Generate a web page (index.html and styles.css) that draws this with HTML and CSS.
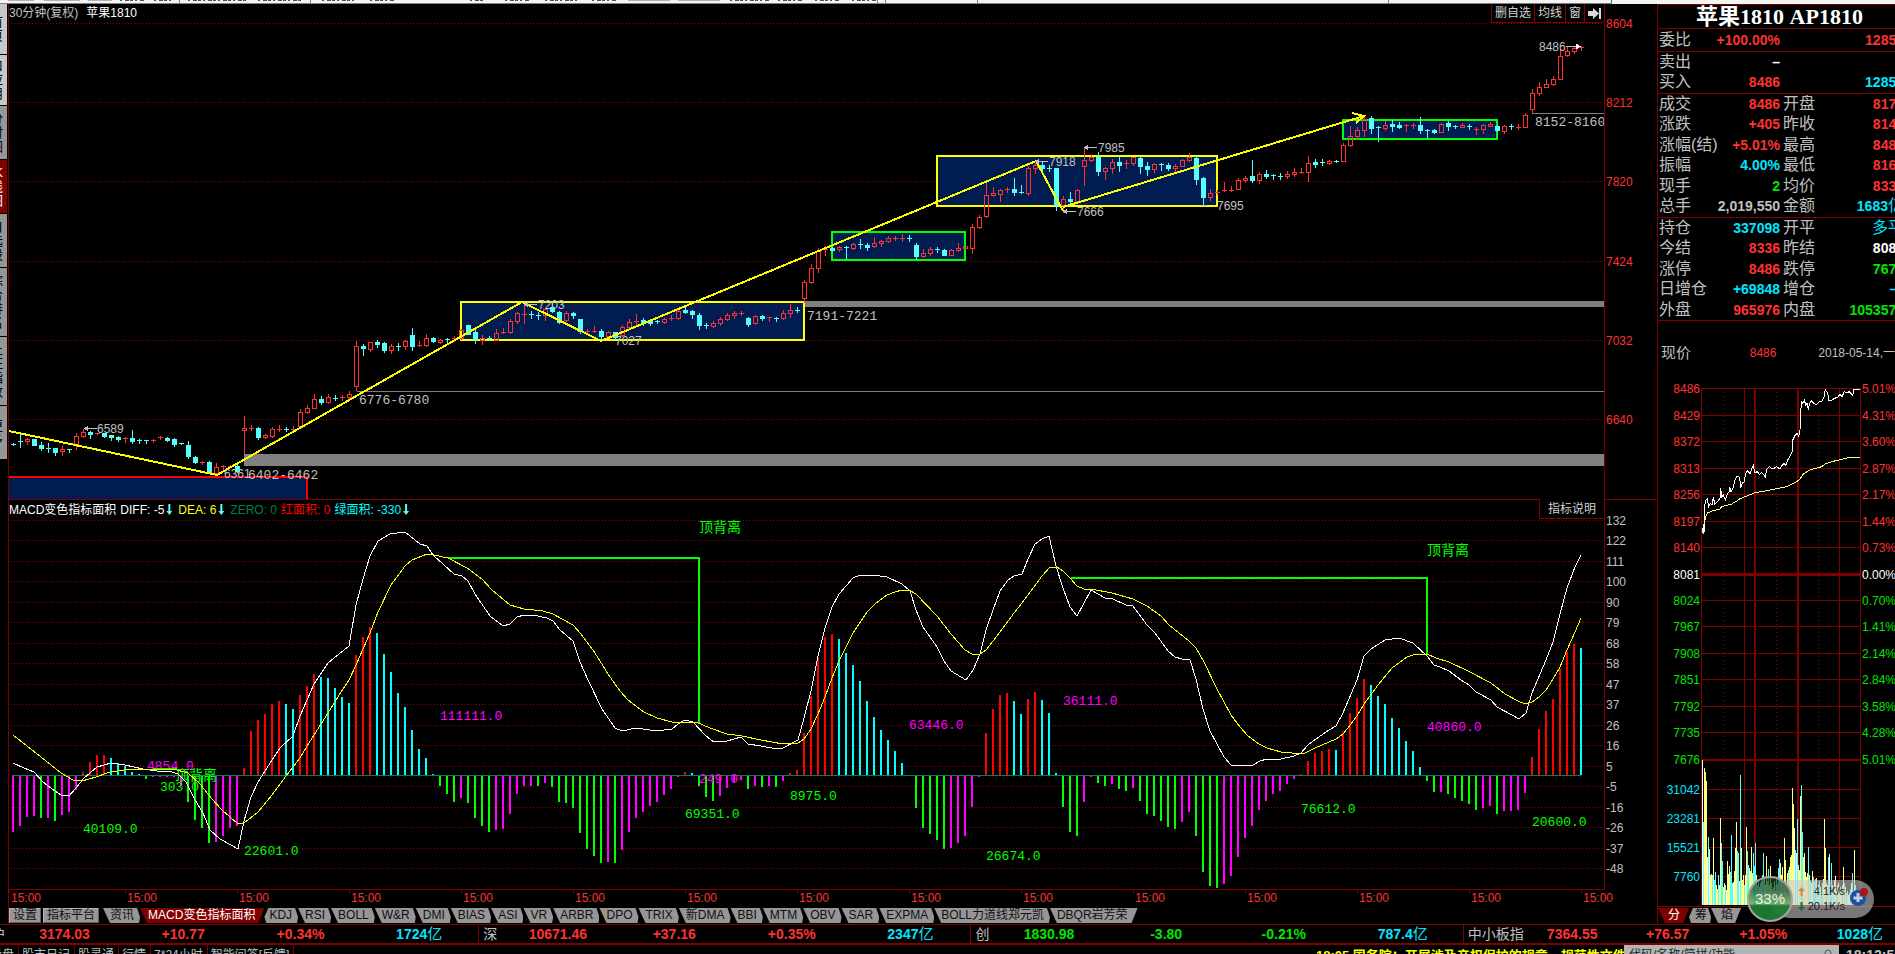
FILE: index.html
```html
<!DOCTYPE html>
<html lang="zh-CN">
<head>
<meta charset="utf-8">
<title>苹果1810 AP1810</title>
<link rel="stylesheet" href="styles.css">
</head>
<body>
<header class="toolbar"><svg class="toolbar-marks" id="toolbarMarks" aria-hidden="true"></svg></header>
<div class="workspace">
  <nav class="side">
    <button class="side-tab light">首<br>页</button>
    <button class="side-tab light">口<br>应<br>用</button>
    <button class="side-tab">分<br>时<br>图</button>
    <button class="side-tab active">K<br>线<br>图</button>
    <button class="side-tab">自<br>选<br>股</button>
    <button class="side-tab tall">综<br>合<br>排<br>名</button>
    <button class="side-tab tall">上<br>证<br>指<br>数</button>
    <button class="side-tab">更<br>多</button>
  </nav>
  <main class="charts">
    <section class="panel price-panel">
      <svg class="plot" id="price"></svg>
      <h2 class="legend"><span class="silver">30分钟(复权)</span><span class="white">苹果1810</span></h2>
      <div class="tools">
        <button>删自选</button><button>均线</button><button>窗</button><button aria-label="最新"><svg width="13" height="13" viewBox="0 0 13 13"><path d="M0 4h5V1l6 5.500-6 5.500V9H0zM11 1h2v11h-2z" fill="#d8d8d8"/></svg></button>
      </div>
    </section>
    <section class="panel macd-panel">
      <svg class="plot" id="macd"></svg>
      <h2 class="legend macd-legend">
        <span class="white">MACD变色指标面积</span>
        <span class="white">DIFF: -5<i class="down"></i></span>
        <span class="yellow">DEA: 6<i class="down"></i></span>
        <span class="dgreen">ZERO: 0</span>
        <span class="pure-red">红面积: 0</span>
        <span class="aqua">绿面积: -330<i class="down"></i></span>
      </h2>
      <div class="tools"><button class="explain">指标说明</button></div>
    </section>
    <nav class="tabs">
      <button class="box">设置</button><button class="box">指标平台</button>
      <button class="tab news">资讯</button><button class="tab on">MACD变色指标面积</button><button class="tab first">KDJ</button><button class="tab">RSI</button><button class="tab">BOLL</button><button class="tab">W&amp;R</button><button class="tab">DMI</button><button class="tab">BIAS</button><button class="tab">ASI</button><button class="tab">VR</button><button class="tab">ARBR</button><button class="tab">DPO</button><button class="tab">TRIX</button><button class="tab">新DMA</button><button class="tab">BBI</button><button class="tab">MTM</button><button class="tab">OBV</button><button class="tab">SAR</button><button class="tab">EXPMA</button><button class="tab">BOLL力道线郑元凯</button><button class="tab last">DBQR岩芳荣</button>
    </nav>
  </main>
  <aside class="quote">
    <h1 class="quote-title">苹果1810 AP1810</h1>
    <dl class="rows">
      <div class="row end"><dt>委比</dt><dd class="red">+100.00%</dd><dt></dt><dd class="red">12850</dd></div>
      <div class="row"><dt>卖出</dt><dd class="white">–</dd><dt></dt><dd></dd></div>
      <div class="row end"><dt>买入</dt><dd class="red">8486</dd><dt></dt><dd class="cyan">12850</dd></div>
      <div class="row"><dt>成交</dt><dd class="red">8486</dd><dt>开盘</dt><dd class="red">8170</dd></div>
      <div class="row"><dt>涨跌</dt><dd class="red">+405</dd><dt>昨收</dt><dd class="red">8141</dd></div>
      <div class="row"><dt>涨幅(结)</dt><dd class="red">+5.01%</dd><dt>最高</dt><dd class="red">8486</dd></div>
      <div class="row"><dt>振幅</dt><dd class="cyan">4.00%</dd><dt>最低</dt><dd class="red">8161</dd></div>
      <div class="row"><dt>现手</dt><dd class="green">2</dd><dt>均价</dt><dd class="red">8336</dd></div>
      <div class="row end"><dt>总手</dt><dd class="silver">2,019,550</dd><dt>金额</dt><dd class="cyan">1683<em>亿</em></dd></div>
      <div class="row"><dt>持仓</dt><dd class="cyan">337098</dd><dt>开平</dt><dd class="cyan"><em>多平</em></dd></div>
      <div class="row"><dt>今结</dt><dd class="red">8336</dd><dt>昨结</dt><dd class="white">8081</dd></div>
      <div class="row"><dt>涨停</dt><dd class="red">8486</dd><dt>跌停</dt><dd class="green">7676</dd></div>
      <div class="row"><dt>日增仓</dt><dd class="cyan">+69848</dd><dt>增仓</dt><dd class="cyan">—</dd></div>
      <div class="row end"><dt>外盘</dt><dd class="red">965976</dd><dt>内盘</dt><dd class="green">1053574</dd></div>
    </dl>
    <div class="now"><span class="now-label">现价</span><span class="now-price">8486</span><span class="now-date">2018-05-14,一</span></div>
    <svg class="intraday" id="intraday"></svg>
    <nav class="tabs quote-tabs"><button class="tab on">分</button><button class="tab first">筹</button><button class="tab last">焰</button></nav>
    <div class="netmeter">
      <div class="net-pill">
        <span><svg width="7" height="9" viewBox="0 0 7 9"><path d="M3.500 0 7 4H4.500v5h-2V4H0z" fill="#d0885a"/></svg>4.1K/s</span>
        <span><svg width="7" height="9" viewBox="0 0 7 9"><path d="M3.500 9 7 5H4.500V0h-2v5H0z" fill="#1f6a3a"/></svg>20.1K/s</span>
      </div>
      <div class="net-ball">33%</div>
      <svg class="net-plus" width="20" height="20" viewBox="0 0 20 20"><circle cx="9" cy="11" r="8" fill="#1f50a0"/><path d="M9 6v9M4.500 11h9" stroke="#c4cede" stroke-width="3"/><circle cx="15" cy="5" r="4" fill="#b01212"/></svg>
    </div>
  </aside>
</div>
<section class="indices">
  <div class="idx sh"><span><b>沪</b><strong class="red">3174.03</strong></span><strong class="red">+10.77</strong><strong class="red">+0.34%</strong><strong class="cyan">1724<em>亿</em></strong></div>
  <div class="idx sz"><span><b>深</b><strong class="red">10671.46</strong></span><strong class="red">+37.16</strong><strong class="red">+0.35%</strong><strong class="cyan">2347<em>亿</em></strong></div>
  <div class="idx cy"><span><b>创</b><strong class="green">1830.98</strong></span><strong class="green">-3.80</strong><strong class="green">-0.21%</strong><strong class="cyan">787.4<em>亿</em></strong></div>
  <div class="idx zx"><span><b>中小板指</b><strong class="red">7364.55</strong></span><strong class="red">+76.57</strong><strong class="red">+1.05%</strong><strong class="cyan">1028<em>亿</em></strong></div>
</section>
<footer class="status">
  <div class="links"><a href="#">操盘</a><a href="#">股市日记</a><a href="#">股灵通</a><a href="#">行情</a><a href="#">7*24小时</a><a href="#">智能问答[反馈]</a></div>
  <div class="news-line">18:05 国务院：开展涉及产权保护的规章、规范性文件</div>
  <div class="search"><input type="text" aria-label="搜索" placeholder="代码/名称/简拼/功能"><svg width="10" height="12" viewBox="0 0 10 12"><circle cx="5" cy="4" r="3" fill="none" stroke="#555"/></svg></div>
  <time class="clock">18:12:56</time>
</footer>
<script src="charts.js"></script>
</body>
</html>
```
FILE: styles.css
```css
* { box-sizing: border-box; }
html, body { height: 100%; }
body {
  margin: 0;
  display: flex;
  flex-direction: column;
  overflow: hidden;
  background: #000;
  color: #c0c0c0;
  font: 12px/16px "Liberation Sans", "Noto Sans CJK SC", sans-serif;
}
button { font: inherit; border: 0; margin: 0; padding: 0; background: none; color: inherit; white-space: nowrap; }
h1, h2, dl, dd { margin: 0; }
em, i { font-style: normal; }
em { font-weight: 400; font-size: 15px; line-height: 16px; }

.white { color: #fff; }
.silver { color: #c0c0c0; }
.red { color: #ff3232; }
.green { color: #00e600; }
.cyan { color: #00e6ff; }
.yellow { color: #ff0; }
.dgreen { color: #008040; }
.pure-red { color: #f00; }
.aqua { color: #0ff; }

.toolbar { flex: none; height: 4px; background: #f4f4f4; }
.toolbar-marks { display: block; width: 100%; height: 4px; }

.workspace { flex: 1; min-height: 0; display: flex; }

.side { flex: none; width: 9px; border-right: 1px solid #800000; display: flex; flex-direction: column; gap: 1px; overflow: hidden; }
.side-tab {
  flex: none; width: 8px; height: 53px; padding-right: 4px; overflow: hidden;
  display: flex; justify-content: flex-end; align-items: center;
  background: #969696; color: #000; font-size: 13px; line-height: 14px; text-align: right;
  border-right: 1px solid #000;
}
.side-tab.light { height: 50px; background: #c8c8c8; }
.side-tab.tall { height: 68px; }
.side-tab.active { background: #800000; color: #fff; }

.charts { flex: 1; min-width: 0; display: flex; flex-direction: column; }
.panel { position: relative; min-height: 0; }
.price-panel { flex: 495; }
.macd-panel { flex: 409; }
.plot { position: absolute; inset: 0; width: 100%; height: 100%; }
.legend { position: absolute; left: 0; top: 1px; display: flex; gap: 8px; font-weight: 400; font-size: 12px; line-height: 16px; white-space: nowrap; }
.macd-legend { top: 3px; gap: 4px; }
.down { display: inline-block; width: 7px; height: 11px; margin: 0 2px 0 1px; vertical-align: -1px; background: #54ffff; clip-path: polygon(3px 0, 5px 0, 5px 7px, 7px 7px, 4px 11px, 1px 7px, 3px 7px); }
.tools { position: absolute; right: 53px; top: 0; display: flex; border: 1px solid #800000; border-top: 0; border-right: 0; background: #000; line-height: 18px; }
.tools button { padding: 0 3px 0 3px; border-right: 1px solid #800000; display: flex; align-items: center; color: #d0d0d0; }
.tools button:last-child { border-right: 0; }
.tools .explain { padding: 1px 8px 0; }

.tabs { flex: none; height: 16px; display: flex; line-height: 15px; color: #101010; }
.box { background: #969696; border: 1px solid #b8b8b8; border-right-color: #606060; border-bottom-color: #606060; padding: 0 3px; margin-right: 2px; line-height: 13px; height: 15px; }
.tab { height: 15px; padding: 0 6px 0 7px; background: #969696; clip-path: polygon(0 0, calc(100% - 3px) 0, 100% 60%, calc(100% - 1px) 100%, 7px 100%); }
.tab.news { margin-left: 2px; }
.tab.on { background: #800000; color: #fff; padding: 0 9px 0 8px; clip-path: polygon(0 0, 100% 0, calc(100% - 6px) 100%, 7px 100%); }
.tab.first { padding-left: 5px; clip-path: polygon(4px 0, calc(100% - 3px) 0, 100% 60%, calc(100% - 1px) 100%, 2px 100%, 0 60%); }
.tab.last { padding-right: 10px; clip-path: polygon(0 0, 100% 0, calc(100% - 6px) 100%, 7px 100%); }

.quote { position: relative; flex: none; width: 238px; border-left: 1px solid #800000; border-top: 1px solid #800000; display: flex; flex-direction: column; overflow: hidden; }
.quote-title { flex: none; height: 24px; border-bottom: 1px solid #800000; color: #fff; text-align: center; font: bold 22px/24px "Liberation Serif", "Noto Sans CJK SC", serif; padding-left: 6px; white-space: nowrap; }
.rows { flex: none; height: 292px; display: flex; flex-direction: column; }
.row { flex: 1; display: grid; grid-template-columns: 56px 65px 43px 81px; align-items: center; padding-left: 1px; margin-right: -9px; white-space: nowrap; line-height: 20px; }
.row.end { border-bottom: 1px solid #800000; }
.row:first-child { padding-top: 1px; }
.row dt { font-size: 16px; }
.row dt + dd + dt { padding-left: 3px; }
.row dd { font-weight: 700; font-size: 14px; text-align: right; }
.row dd em { font-size: 16px; }
.now { flex: none; height: 61px; display: flex; align-items: center; padding: 2px 0 0 3px; white-space: nowrap; }
.now-label { width: 92px; font-size: 15px; }
.now-price { width: 71px; color: #ff3232; }
.intraday { flex: 1; min-height: 0; width: 100%; border-bottom: 1px solid #800000; }
.quote-tabs { height: 17px; padding-top: 1px; }
.quote-tabs .tab { padding: 0 9px 0 10px; }
.quote-tabs .tab.first { padding: 0 4px 0 6px; }
.quote-tabs .tab.last { padding: 0 8px 0 10px; }

.netmeter { position: absolute; right: 21px; bottom: 2px; width: 127px; height: 46px; display: flex; align-items: center; justify-content: flex-end; }
.net-pill { width: 104px; height: 38px; border-radius: 19px; background: rgba(200, 200, 200, .6); color: #222; padding: 4px 29px 0 28px; line-height: 15px; font-size: 11px; display: flex; flex-direction: column; }
.net-pill span { display: flex; justify-content: space-between; align-items: center; white-space: nowrap; }
.net-ball { position: absolute; left: 0; top: 0; width: 46px; height: 46px; border-radius: 50%; border: 2px solid #a4a4a4; background: linear-gradient(rgba(20, 70, 35, .7) 0 30%, rgba(90, 160, 90, .75) 60%, rgba(30, 125, 50, .95) 68%); color: #f0f0e0; font-size: 15px; line-height: 42px; text-align: center; }
.net-plus { position: absolute; right: 5px; top: 11px; }

.indices { flex: none; height: 21px; display: flex; border-top: 1px solid #800000; border-bottom: 2px solid #800000; line-height: 18px; }
.idx { display: grid; border-right: 1px solid #800000; font-size: 14px; white-space: nowrap; text-align: right; }
.idx:last-child { border-right: 0; }
.idx span { display: flex; justify-content: space-between; padding-left: 4px; }
.idx b { font-weight: 400; font-size: 14px; color: #c0c0c0; }
.sh { flex: 479; grid-template-columns: 90fr 115fr 120fr 118fr 36fr; }
.sz { flex: 492; grid-template-columns: 108fr 109fr 120fr 118fr 37fr; }
.cy { flex: 492; grid-template-columns: 103fr 108fr 124fr 122fr 35fr; }
.zx { flex: 432; grid-template-columns: 134fr 92fr 98fr 96fr 12fr; }
.sh span { padding-left: 0; }
.sh b { margin-left: -9px; }

.status { flex: none; height: 9px; display: flex; overflow: hidden; }
.links { display: flex; flex: 1; margin-left: -13px; }
.links a { height: 20px; padding: 1px 4px 0 3px; border-right: 1px solid #800000; color: #c0c0c0; text-decoration: none; line-height: 18px; white-space: nowrap; }
.news-line { flex: none; color: #ff0; font-weight: 700; font-size: 13px; line-height: 22px; width: 308px; overflow: hidden; white-space: nowrap; height: 22px; }
.search { flex: none; width: 215px; height: 22px; display: flex; background: #b4b4b4; padding-right: 6px; }
.search input { flex: 1; min-width: 0; border: 0; background: none; font: 12px/18px "Liberation Sans", "Noto Sans CJK SC", sans-serif; padding: 0 5px; height: 20px; }
.search input::placeholder { color: #222; opacity: 1; }
.search svg { margin-top: 4px; }
.clock { flex: none; width: 56px; padding-left: 7px; font-weight: 700; font-size: 14px; line-height: 20px; overflow: hidden; }

.axis { font-size: 12px; fill: #ff3232; }
.axis.grey { fill: #c0c0c0; }
.note { font-size: 12px; fill: #c0c0c0; }
.mono { font: 13px "Liberation Mono", monospace; fill: #c0c0c0; }
.cn { font-size: 14px; fill: #0f0; }
.end { text-anchor: end; }
```
FILE: charts.js
```js
const NS = 'http://www.w3.org/2000/svg';
const el = (parent, name, attrs, text) => {
  const n = document.createElementNS(NS, name);
  for (const k in attrs) n.setAttribute(k, attrs[k]);
  if (text !== undefined) n.textContent = text;
  parent.appendChild(n);
  return n;
};
const rect = (g, x, y, w, h, fill) => el(g, 'rect', { x, y, width: w, height: h, fill });
const text = (g, x, y, s, cls, fill) => el(g, 'text', fill ? { x, y, class: cls, style: 'fill:' + fill } : { x, y, class: cls }, s);
const layer = (id, dx, dy) => el(document.getElementById(id), 'g', { transform: `translate(${-dx} ${-dy})`, 'shape-rendering': 'crispEdges' });
const poly = (g, pts, stroke, w) => el(g, 'polyline', { points: pts, fill: 'none', stroke, 'stroke-width': w || 1 });
const dots = (g, x1, y1, x2, y2) => el(g, 'line', { x1, y1: y1 + 0.5, x2, y2: y2 + 0.5, stroke: '#900000', 'stroke-dasharray': '1 2' });
const barX = i => 13 + 7 * i;
const EDGE = 1604, DARK = '#800000', NAVY = '#001c50';

/* ---------- price panel ---------- */
const p = layer('price', 9, 4);
const priceLevels = [[23, 8604], [102, 8212], [181, 7820], [261, 7424], [340, 7032], [419, 6640]];
priceLevels.forEach(([y]) => dots(p, 11, y, EDGE, y));
rect(p, 244, 454, 1360, 12, '#808080');
rect(p, 357, 391, 1247, 1, '#808080');
rect(p, 805, 301, 799, 6, '#808080');
rect(p, 1533, 113, 71, 1, '#808080');
const zone = (x1, y1, x2, y2, stroke) => el(p, 'rect', { x: x1, y: y1, width: x2 - x1, height: y2 - y1, fill: NAVY, stroke, 'stroke-width': 2 });
zone(7, 477, 307, 520, '#f00');
zone(461, 302, 804, 340, '#ff0');
zone(832, 232, 965, 260, '#0f0');
zone(937, 156, 1217, 206, '#ff0');
zone(1343, 120, 1497, 139, '#0f0');

/* direction, high, body top, body bottom, low */
const candles = `c443 444 445 445|c434 441 442 447|r438 439 441 444|c439 439 445 445|c442 445 448 450|c443 448 449 452|c448 448 452 455|r446 449 451 455|c449 449 450 452|r433 436 444 449
r429 432 436 437|c431 432 434 438|r433 433 434 434|c433 433 436 437|c435 435 437 440|c436 437 439 441|r437 438 439 442|c430 438 441 443|c439 440 441 443|c440 440 441 443
r439 440 441 442|r436 437 438 439|c437 438 440 441|c438 439 444 446|c443 443 444 444|c441 445 456 458|c456 457 462 463|r461 462 463 464|c461 462 473 473|r463 467 473 474
r465 466 467 470|r465 466 467 467|c465 466 471 472|r416 428 430 454|r425 428 429 430|c427 428 437 439|r434 435 437 438|r427 429 436 437|r425 429 430 431|c427 429 430 431
r426 429 430 430|r409 412 426 427|r405 408 412 413|r394 399 408 408|c396 399 402 404|r394 397 402 403|c395 398 399 400|r395 397 398 400|r391 394 397 399|r341 346 386 390
c344 346 348 355|r342 342 349 351|c340 342 344 347|c342 343 350 352|r344 346 350 353|c343 346 347 350|r340 341 346 349|c328 335 346 350|r341 345 346 346|r334 338 345 346
c337 338 341 342|r339 340 342 343|c338 339 340 343|r336 338 339 341|r329 330 338 339|c325 325 334 334|c330 332 339 343|r335 338 340 344|c336 338 339 340|r329 333 340 340
r328 332 333 333|r319 321 332 333|r312 313 321 323|r304 314 315 323|c311 314 315 318|c312 315 316 319|r308 309 315 320|c303 307 311 312|c311 312 322 323|r311 313 320 321
c312 313 315 318|c319 319 331 333|r329 331 332 334|r326 331 332 332|c329 331 336 340|r331 332 336 338|c332 332 337 339|r325 327 335 336|r319 322 327 328|r314 321 322 326
c318 320 323 325|c319 321 323 325|c320 321 322 323|r318 319 322 323|r315 318 319 320|r310 311 318 319|c306 310 312 313|c310 311 314 318|c313 315 325 329|c323 325 326 328
r321 323 326 327|r317 319 323 325|r313 315 319 320|r311 313 315 318|r311 313 314 315|c317 318 324 326|r315 316 323 324|c315 316 318 320|r317 317 318 321|c317 318 319 321
r310 313 318 319|r304 310 313 317|c307 310 311 312|r280 282 298 302|r264 268 282 283|r248 251 268 272|r246 249 250 255|c247 248 250 251|r246 247 249 251|c246 247 248 258
r243 244 248 249|c239 244 245 248|c243 245 247 250|r237 243 246 247|r240 241 243 246|r236 238 241 242|r236 238 239 240|r234 238 239 241|c235 238 239 241|c243 245 256 259
r249 253 256 257|r247 249 253 255|c247 249 250 252|c249 250 255 255|r249 250 255 255|r243 248 250 251|r246 246 248 248|r224 227 248 253|r215 217 227 228|r183 195 216 217
r187 193 195 196|r189 190 194 201|r187 189 190 192|c178 189 192 195|c185 192 193 193|r166 168 193 195|r163 165 168 173|c162 165 168 174|c165 168 169 171|c168 168 205 210
r196 199 205 212|c192 199 201 205|r189 190 201 202|r148 160 166 185|r154 157 160 161|c152 157 171 175|r167 168 171 179|r159 162 168 173|c157 162 165 171|r160 163 164 168
r157 157 163 165|c157 158 166 173|c162 166 169 175|r163 164 169 172|c163 164 165 170|c163 165 168 170|r164 166 168 172|r159 160 166 166|r153 157 160 161|c155 158 179 184
c177 178 197 205|r189 193 197 200|r190 192 193 194|r182 190 191 191|r186 190 191 191|r178 180 189 189|r176 178 180 182|c160 176 180 182|r172 174 180 183|c170 174 176 178
c174 175 176 179|c173 176 177 179|r171 174 176 178|r168 172 174 176|r168 172 173 173|r156 163 172 181|c159 162 164 167|c159 162 163 165|r160 161 163 164|c160 161 162 162
r143 145 161 161|r126 136 145 146|r127 130 136 139|r117 119 130 136|c116 118 128 133|c126 127 128 141|r121 125 128 130|c120 124 126 131|c122 125 127 128|r124 125 126 131
r123 125 126 128|c117 125 130 133|c129 130 131 138|c129 130 132 133|r123 124 132 132|c121 123 126 130|c125 126 127 128|r123 125 127 127|c124 126 127 129|r127 129 130 134
r124 125 129 133|r122 124 126 126|c125 126 130 131|r125 126 131 133|c124 126 127 129|r124 127 128 129|r113 115 127 127|r89 93 109 113|r82 87 93 95|r79 84 87 87
r76 79 84 85|r49 56 79 79|r47 51 55 56|r46 48 51 53|r46 47 48 50`.split(/[|\n]/);
candles.forEach((s, i) => {
  const up = s[0] === 'r', [hi, top, bot, lo] = s.slice(1).split(' ').map(Number), x = barX(i);
  const color = up ? '#ff3232' : '#54ffff';
  rect(p, x, hi, 1, top - hi, color);
  rect(p, x, bot, 1, lo - bot + 1, color);
  if (up && bot - top > 1) el(p, 'rect', { x: x - 1.5, y: top + 0.5, width: 4, height: bot - top, fill: 'none', stroke: color });
  else rect(p, x - 2, top, 5, Math.max(1, bot - top + (bot - top > 1 ? 1 : 0)), color);
});

poly(p, '9,431 217,475 522,302 601,341 1036,161', '#ff0', 2);
poly(p, '1036,161 1063,211', '#ff0', 2);
poly(p, '1063,207 1364,116', '#ff0', 2);
poly(p, '1352,113 1364,116 1356,123', '#ff0', 2);

const leftArrow = (x, y) => { rect(p, x, y, 12, 1, '#c0c0c0'); el(p, 'path', { d: `M${x - 1} ${y + 0.5}l4-3v6z`, fill: '#c0c0c0' }); };
[[85, 428, 97, 6589], [525, 304, 538, 7203], [1036, 161, 1049, 7918], [1085, 147, 1098, 7985], [1064, 211, 1077, 7666]].forEach(([ax, ay, x, v]) => {
  leftArrow(ax, ay);
  text(p, x, ay + 5, v, 'note');
});
text(p, 615, 345, 7027, 'note');
text(p, 224, 478, 6361, 'note');
text(p, 1217, 210, 7695, 'note');
rect(p, 1202, 205, 5, 1, '#c0c0c0');
text(p, 1539, 51, 8486, 'note');
rect(p, 1566, 46, 14, 1, '#c0c0c0');
el(p, 'path', { d: 'M1576 43.500l5 3-5 3z', fill: '#fff' });
[[359, 404, '6776-6780'], [248, 479, '6402-6462'], [807, 320, '7191-7221'], [1535, 126, '8152-8160']].forEach(([x, y, s]) => text(p, x, y, s, 'mono'));
rect(p, EDGE, 0, 53, 600, '#000');
priceLevels.forEach(([y, v]) => text(p, 1606, y + 5, v, 'axis'));
rect(p, EDGE, 4, 1, 495, DARK);

/* ---------- MACD panel ---------- */
const m = layer('macd', 9, 499);
rect(m, 8, 499, 1650, 1, DARK);
[[520, 132], [540, 122], [561, 111], [581, 100], [602, 90], [622, 79], [643, 68], [663, 58], [684, 47], [704, 37], [725, 26], [745, 16], [766, 5], [786, -5], [807, -16], [827, -26], [848, -37], [868, -48]].forEach(([y, v]) => {
  dots(m, 11, y, EDGE, y);
  text(m, 1606, y + 5, v, 'axis grey');
});
rect(m, EDGE, 499, 1, 391, DARK);
rect(m, 8, 889, 1597, 1, DARK);
for (let k = 0; k < 15; k++) {
  const x = k === 14 ? 1581 : k ? 13 + 112 * k : 9;
  rect(m, x, 890, 1, 3, DARK);
  text(m, x + 2, 902, '15:00', 'axis');
}
/* r/c rise above the zero line, g/m hang below it */
const hist = `m56 m50 m41 m40 g42 m42 g45 m39 m36 m14 r3 r13 r20 r20 c17 c12 c9 c3 c1 g3 m1 m1 m1 m1 m10 g26 g44 g52 g67 m66 m60 m52 m50 r7 r44 r55 r61 r71 r74 c71 c66 r80 r89 r101 c98 c97 c87 c78 c72 r120 r138 r148 c142 c121 c103 c82 c68 c45 c26 c17 c1
g10 g18 g26 m22 g27 g42 g50 g56 m54 m53 m38 m18 m10 m10 g10 m7 g11 g26 g27 g32 g57 g73 g80 g87 m86 g87 m74 m56 m42 m36 m30 m26 m19 m13 m1 r3 c2 g10 g21 g25 m20 m12 m6 m4 g13 m10 g11 m10 g11 m5 r2 r5 r42 r79 r118 r138 r141 c136 c122 c110 c94 c74 c58 c45 c35 c24 c12 c0
g32 g52 g58 g64 g73 m72 m67 m60 m31 m1 r42 r66 r80 r82 c74 c61 r76 r83 c75 c62 c2 g31 g56 g60 m26 m1 g7 g10 m8 g13 g15 m12 g25 g38 g40 g45 g51 g53 m46 m36 g60 g96 g110 g112 m108 m100 m81 m62 m50 m34 m25 m18 m15 m8 m3 r1 r14 r22 r24 r26 c25 r43 r62 r77 r96 c90 c79 c71 c57 c47 c34 c24 c8
g5 g16 m16 g18 g22 g25 g28 g34 m32 m30 g38 m35 m35 m34 m17 r18 r46 r64 r76 r106 r123 r131 c127`.split(/\s+/);
const barColor = { r: '#f00', c: '#0ff', g: '#0f0', m: '#f0f' };
hist.forEach((s, i) => {
  const h = +s.slice(1), y = 'rc'.includes(s[0]) ? 775 - h : 776;
  rect(m, barX(i) - 1, y, 2, h, barColor[s[0]]);
});
rect(m, 12, 775, 1569, 1, '#008060');
[[440, 720, '111111.0', '#f0f'], [83, 833, '40109.0', '#0f0'], [244, 855, '22601.0', '#0f0'], [147, 770, '4854.0', '#f0f'], [160, 791, '303.0', '#0f0'], [685, 818, '69351.0', '#0f0'], [699, 783, '249.0', '#f0f'], [790, 800, '8975.0', '#0f0'], [909, 729, '63446.0', '#f0f'], [986, 860, '26674.0', '#0f0'], [1063, 705, '36111.0', '#f0f'], [1301, 813, '76612.0', '#0f0'], [1532, 826, '20600.0', '#0f0'], [1427, 731, '40860.0', '#f0f']].forEach(([x, y, s, f]) => text(m, x, y, s, 'mono', f));
[[699, 532], [1427, 555], [175, 780]].forEach(([x, y]) => text(m, x, y, '顶背离', 'cn'));
poly(m, '448,558 699,558 699,723', '#0f0', 2);
poly(m, '1071,578 1427,578 1427,654', '#0f0', 2);
rect(m, 153, 768, 24, 2, '#0f0');
poly(m, '13,763 24,768 34,772 43,782 55,791 61,795 69,796 76,788 84,778 97,767 111,763 125,765 143,769 157,771 169,771 178,774 186,782 195,800 203,813 210,830 220,839 231,845 238,849 244,821 251,797 258,782 272,760 280,748 293,736 300,716 307,700 314,684 328,663 339,654 349,646 356,605 363,579 370,556 378,541 390,534 405,532 420,544 427,546 433,555 454,574 462,576 468,581 475,594 490,616 503,626 510,624 517,617 524,615 533,615 547,618 553,621 560,630 573,641 580,662 588,680 602,709 615,728 622,731 636,728 657,731 672,729 678,724 685,720 693,722 706,736 714,742 727,741 741,737 748,744 761,746 777,749 783,748 798,740 804,718 811,691 818,656 825,628 832,607 839,594 853,578 860,575 873,575 887,577 902,584 910,591 916,610 923,627 937,647 944,661 951,671 966,680 973,670 980,654 986,630 993,610 1000,591 1008,580 1014,576 1022,574 1028,559 1035,544 1042,539 1049,536 1056,566 1063,588 1070,607 1077,616 1091,590 1105,598 1113,599 1126,605 1133,606 1147,625 1155,633 1168,651 1175,657 1182,659 1190,660 1196,679 1203,709 1210,731 1224,757 1231,765 1238,766 1246,765 1253,765 1260,761 1267,759 1281,759 1294,756 1301,753 1308,745 1316,739 1329,730 1336,726 1343,713 1357,680 1364,656 1371,649 1385,640 1399,638 1413,643 1427,656 1434,665 1440,667 1449,671 1461,680 1469,685 1476,692 1491,700 1497,707 1512,715 1519,719 1526,713 1532,693 1546,660 1553,642 1560,614 1567,588 1575,567 1581,555', '#fff');
poly(m, '13,735 41,757 61,773 73,780 82,781 96,777 110,772 131,769 147,769 173,769 188,773 200,784 212,799 222,810 238,824 244,823 258,812 272,795 286,776 300,758 307,746 328,713 341,692 349,680 356,665 370,633 378,612 391,585 405,566 412,560 427,554 434,555 448,558 467,568 482,579 492,590 510,605 524,609 543,611 553,614 573,625 581,634 595,653 608,674 620,691 628,700 644,712 657,718 672,722 696,722 710,728 727,734 742,736 761,740 783,744 798,743 804,739 811,729 818,714 825,697 832,678 839,661 853,633 867,612 875,604 887,595 895,592 902,590 909,590 916,594 937,616 951,634 965,650 972,654 980,654 986,650 1000,632 1014,613 1022,603 1042,576 1050,567 1057,567 1063,571 1070,578 1077,586 1084,589 1091,589 1112,593 1133,599 1147,606 1161,616 1169,625 1189,641 1196,648 1204,662 1217,689 1231,715 1240,727 1248,736 1259,744 1267,748 1281,752 1292,753 1305,753 1315,748 1336,739 1343,734 1351,724 1357,716 1364,704 1378,685 1392,668 1407,657 1413,655 1427,654 1436,658 1449,662 1468,671 1491,683 1505,694 1518,701 1525,704 1532,702 1539,697 1546,690 1553,679 1560,667 1567,650 1575,632 1581,618', '#ff0');

/* ---------- intraday chart ---------- */
const q = layer('intraday', 1658, 382);
const levels = [[388, 8486, '5.01%'], [415, 8429, '4.31%'], [441, 8372, '3.60%'], [468, 8313, '2.87%'], [494, 8256, '2.17%'], [521, 8197, '1.44%'], [547, 8140, '0.73%'], [574, 8081, '0.00%'], [600, 8024, '0.70%'], [626, 7967, '1.41%'], [653, 7908, '2.14%'], [679, 7851, '2.84%'], [706, 7792, '3.58%'], [732, 7735, '4.28%'], [759, 7676, '5.01%']];
levels.forEach(([y, v, pct], i) => {
  const fill = i < 7 ? '#ff3232' : i > 7 ? '#00e600' : '#fff';
  rect(q, 1701, i === 7 ? y - 1 : y, 159, i === 7 ? 3 : i === 14 ? 2 : 1, DARK);
  text(q, 1700, y + 5, v, 'axis end', fill);
  text(q, 1862, y + 5, pct, 'axis', fill);
});
[[789, 31042], [818, 23281], [847, 15521], [876, 7760]].forEach(([y, v]) => {
  rect(q, 1701, y, 159, 1, DARK);
  text(q, 1700, y + 5, v, 'axis end', '#00e6ff');
});
[[1701, 1], [1744, 1], [1754, 2], [1797, 2], [1839, 1], [1860, 1]].forEach(([x, w]) => rect(q, x, 388, w, 517, DARK));
[1723, 1776, 1818].forEach(x => el(q, 'line', { x1: x + 0.5, x2: x + 0.5, y1: 388, y2: 905, stroke: '#900000', 'stroke-dasharray': '1 3' }));
const third = s => s.split(' ').map(t => { const [a, b] = t.split(',').map(Number); return (1640 + a / 3).toFixed(1) + ',' + (320 + b / 3).toFixed(1); }).join(' ');
poly(q, third('187,625 190,643 191,612 192,637 194,555 198,540 203,535 205,562 211,550 216,555 220,530 224,552 230,548 236,540 240,535 242,505 245,530 250,525 256,540 262,522 268,515 269,500 273,515 279,505 285,480 292,468 299,472 302,505 307,490 313,485 317,460 323,452 330,462 335,445 340,437 345,458 352,455 358,463 365,458 376,470 380,448 388,440 398,447 410,440 420,447 427,435 433,430 437,437 443,420 450,408 457,395 458,360 464,348 471,340 476,350 480,330 484,245 489,250 493,240 497,255 501,248 505,270 508,252 514,242 522,250 530,254 537,245 546,243 552,230 556,210 563,218 567,242 575,240 585,235 595,230 600,222 606,230 613,215 620,218 628,215 638,225 642,208 660,208'), '#fff');
poly(q, third('193,612 197,590 203,578 220,572 240,567 245,560 275,552 290,543 300,536 315,530 330,524 345,518 380,512 410,506 440,500 460,490 478,480 490,462 510,450 530,444 545,440 555,432 580,424 600,419 620,414 640,412 660,412'), '#ffff80');
const volume = 'w145 c83 y137 y133 y124 w48 c68 w56 y30 y31 c30 y67 c25 c33 y20 y16 c30 y20 y87 c62 c44 y18 y22 c20 w15 y44 y31 y39 c33 c70 c22 w23 y34 y57 y83 c54 c52 w24 c130 y57 y25 y30 c20 y30 y78 c54 c40 y37 y34 y58 y32 c52 c39 c62 y30 c20 c25 y18 c22 w24 c30 c52 y28 y20 y49 c24 c36 y20 y39 c22 y16 c18 y24 c14 c28 y20 c37 c46 y42 y30 y38 c22 y67 y45 c20 y32 c35 y38 y48 y50 y117 y101 w77 c55 w52 c86 y40 y35 y109 c120 c73 y48 y52 w33 y28 y32 c58 y30 c24 w22 y34 c28 c24 c26 y27 c18 w20 c24 y18 c12 c22 y26 y86 y57 c22 y20 c48 w51 c16 c42 y20 c14 y25 w29 c14 c20 y22 y12 w18 y14 c20 y38 c22 y18 c12 y14 w10 y12 c16 w22 c32 c14 y55 c20'.split(' ');
volume.forEach((s, i) => rect(q, 1702 + i, 905 - s.slice(1), 1, s.slice(1), { w: '#fff', c: '#54ffff', y: '#ffff80' }[s[0]]));

/* ---------- toolbar underside ---------- */
const t = el(document.getElementById('toolbarMarks'), 'g', { 'shape-rendering': 'crispEdges' });
rect(t, 0, 3, 1612, 1, '#808080');
[[8, 26], [44, 36], [88, 24], [628, 42], [678, 42]].forEach(([x, w]) => rect(t, x, 0, w, 1, '#b0b0b0'));
[[120, 22], [154, 20], [188, 56], [258, 45], [322, 34], [370, 24], [470, 14], [505, 24], [545, 32], [592, 24], [730, 36], [778, 23], [815, 25], [852, 22]].forEach(([x, w]) => {
  for (let k = 0; k < w; k += 5) rect(t, x + k, 0, 2 + (k % 3), 1, '#505050');
});
[179, 310, 877, 885, 977, 1388].forEach(x => rect(t, x, 0, 1, 3, '#808080'));
rect(t, 1611, 0, 1, 3, '#606060');
```
